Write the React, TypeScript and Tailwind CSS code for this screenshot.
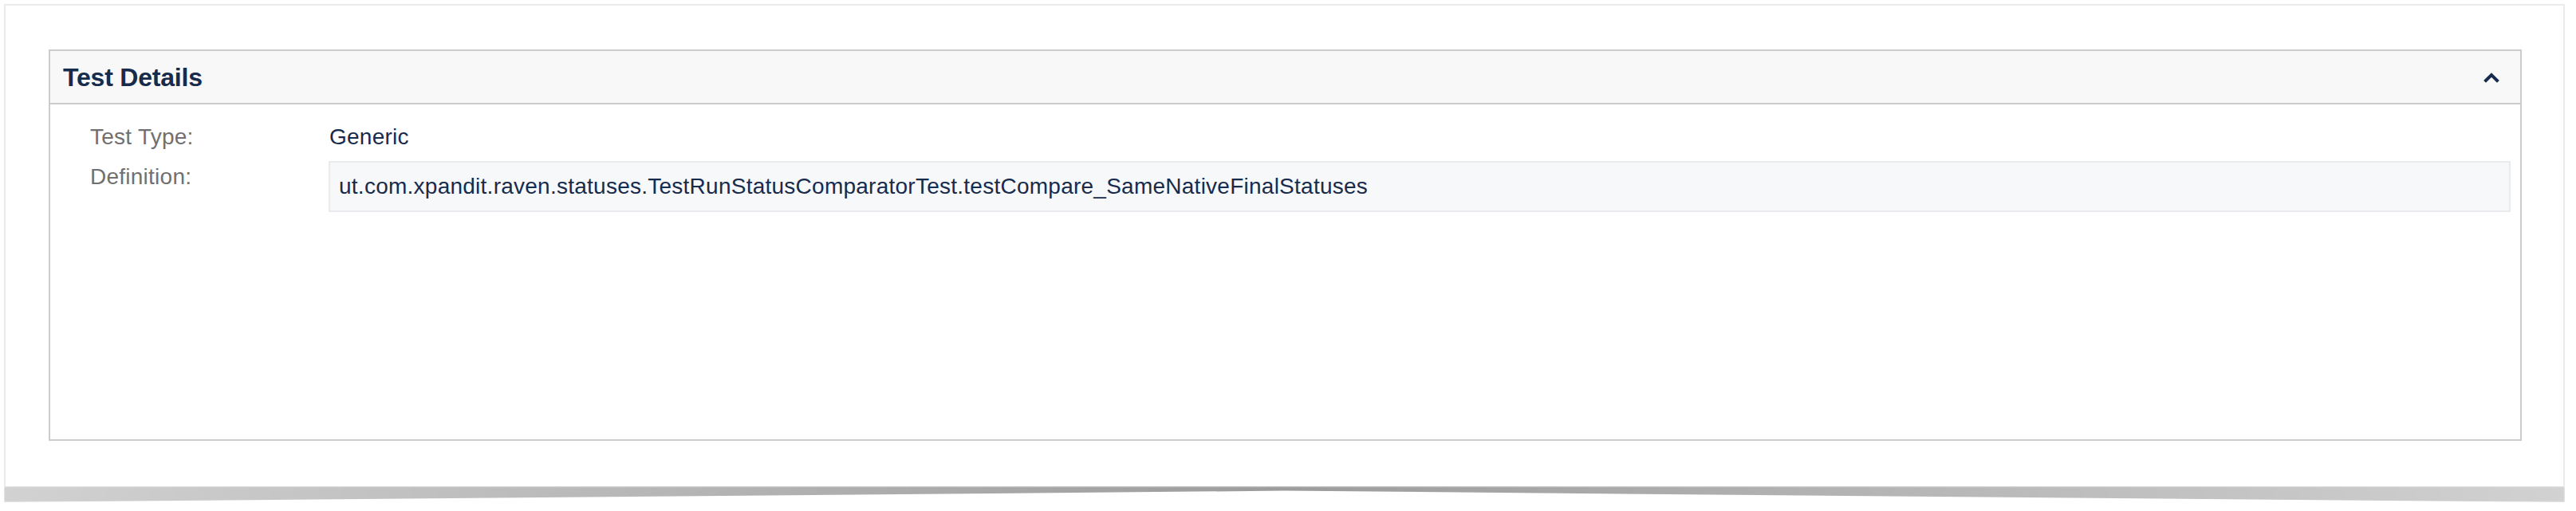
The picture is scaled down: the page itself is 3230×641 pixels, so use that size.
import React from 'react';

const ChevronUp: React.FC = () => (
  <svg width="20" height="14" viewBox="0 0 20 14" fill="none">
    <path d="M3 11 L10 4 L17 11" stroke="#172b4d" strokeWidth="4" strokeLinecap="square" strokeLinejoin="miter" />
  </svg>
);

const App: React.FC = () => {
  const definition =
    'ut.com.xpandit.raven.statuses.TestRunStatusComparatorTest.testCompare_SameNativeFinalStatuses';

  return (
    <div className="w-[3230px] h-[641px] bg-white pt-[5px] pl-[5px] font-['Liberation_Sans',Arial,sans-serif]">
      <div className="w-[3211px]">
        {/* Outer card */}
        <div className="bg-white border-2 border-b-0 border-[#ebebeb] pt-[55px] pl-[54px] pr-[52px] pb-[57px]">
          {/* Test Details panel */}
          <div className="border-2 border-[#cccccc] bg-white">
            <div className="h-[67px] bg-[#f8f8f8] border-b-2 border-[#cccccc] flex items-center justify-between pl-[16px] pr-[26px]">
              <h2 className="text-[32px] font-bold text-[#172b4d] tracking-[-0.2px]">Test Details</h2>
              <ChevronUp />
            </div>
            <div className="h-[420px] pt-[21px] pl-[50px] pr-[12px] flex flex-col gap-[10px] text-[28px] leading-[40px] tracking-[0.25px]">
              <div className="flex">
                <div className="w-[300px] shrink-0 text-[#707070]">Test Type:</div>
                <div className="text-[#172b4d]">Generic</div>
              </div>
              <div className="flex">
                <div className="w-[299px] shrink-0 text-[#707070]">Definition:</div>
                <div className="flex-1 bg-[#f7f8fa] border-2 border-[#e9ebef] pl-[11px] pr-[10px] py-[10px] text-[#172b4d]">
                  {definition}
                </div>
              </div>
            </div>
          </div>
        </div>
        {/* lifted paper shadow */}
        <div className="h-[20px] bg-[linear-gradient(to_right,#d2d2d2,#9c9c9c_50%,#d2d2d2)] [clip-path:polygon(0_0,100%_0,100%_100%,50%_28%,0_100%)] blur-[1px]" />
      </div>
    </div>
  );
};

export default App;
